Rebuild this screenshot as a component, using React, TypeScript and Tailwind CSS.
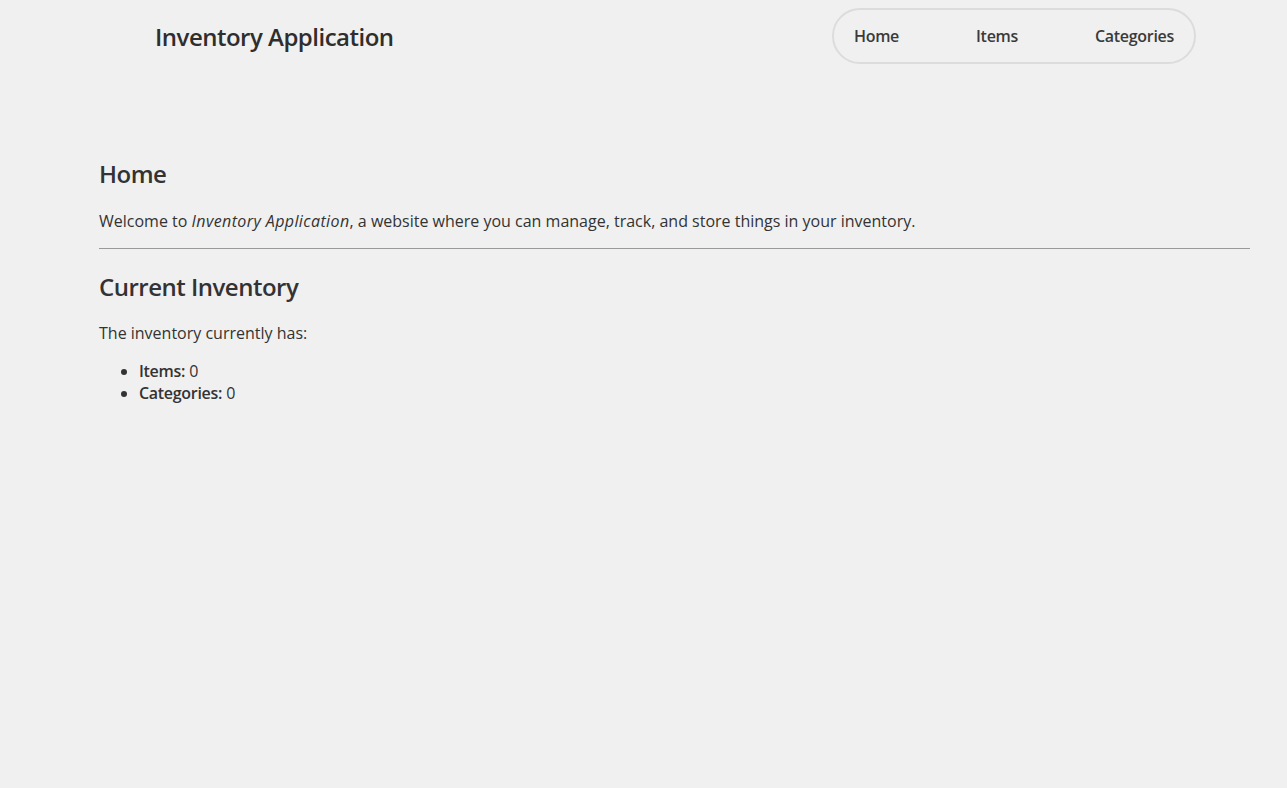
export default function App() {
  return (
    <div className="min-h-screen bg-[#f0f0f0] text-[#333] font-['Open_Sans',sans-serif]">
      <header className="flex items-center justify-between pt-[8px] pl-[155px] pr-[91px]">
        <h1 className="text-[24px] font-semibold leading-[33px] tracking-[-0.5px] text-[#2e2e2e]">
          Inventory Application
        </h1>
        <nav className="flex h-[56px] items-center gap-[77px] rounded-full border-2 border-[#dcdcdc] px-[20px]">
          <a href="#" className="text-[16px] font-semibold tracking-[-0.3px] text-[#3a3a3a]">
            Home
          </a>
          <a href="#" className="text-[16px] font-semibold tracking-[-0.3px] text-[#3a3a3a]">
            Items
          </a>
          <a href="#" className="text-[16px] font-semibold tracking-[-0.3px] text-[#3a3a3a]">
            Categories
          </a>
        </nav>
      </header>

      <main className="pl-[99px] pr-[37px] pt-[93px]">
        <h2 className="text-[24px] font-semibold leading-[33px] tracking-[-0.5px]">
          Home
        </h2>
        <p className="mt-[20px] text-[16px] leading-[22px]">
          Welcome to <em className="tracking-[0.4px]">Inventory Application</em>, a
          website where you can manage, track, and store things in your
          inventory.
        </p>
        <hr className="mt-[16px] border-t border-[#999]" />
        <h2 className="mt-[21px] text-[24px] font-semibold leading-[33px] tracking-[-0.5px]">
          Current Inventory
        </h2>
        <p className="mt-[19px] text-[16px] leading-[22px]">
          The inventory currently has:
        </p>
        <ul className="mt-[16px] list-disc pl-10 text-[16px] leading-[22px]">
          <li>
            <strong className="font-semibold tracking-[-0.3px]">Items:</strong> 0
          </li>
          <li>
            <strong className="font-semibold tracking-[-0.3px]">Categories:</strong> 0
          </li>
        </ul>
      </main>
    </div>
  );
}
